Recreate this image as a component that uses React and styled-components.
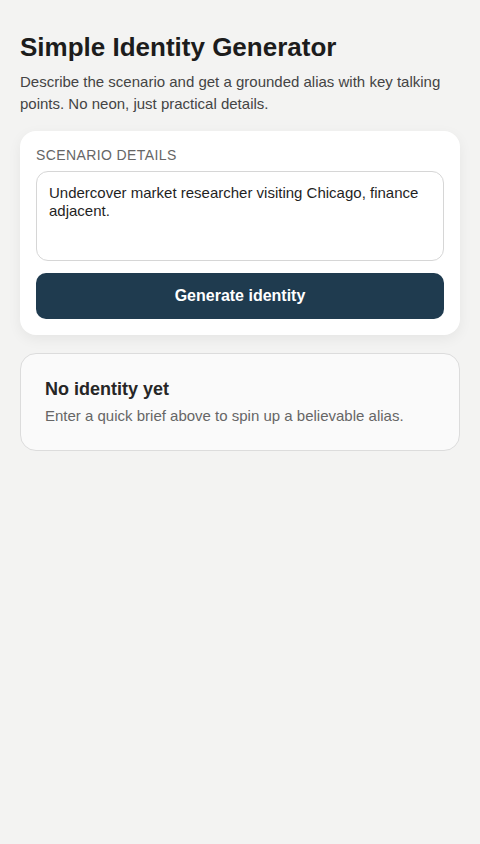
import React, { useState } from 'react';
import styled, { createGlobalStyle } from 'styled-components';

const GlobalStyle = createGlobalStyle`
  * { box-sizing: border-box; }
  body {
    margin: 0;
    background: #f3f3f2;
    font-family: "Liberation Sans", Arial, sans-serif;
    color: #1f1f1f;
  }
`;

const App = () => {
  const [brief, setBrief] = useState('Undercover market researcher visiting Chicago, finance adjacent.');

  return (
    <>
      <GlobalStyle />
      <Page>
        <Title>Simple Identity Generator</Title>
        <Intro>Describe the scenario and get a grounded alias with key talking points. No neon, just practical details.</Intro>
        <FormCard>
          <Label htmlFor="brief">Scenario details</Label>
          <Brief id="brief" value={brief} onChange={(e) => setBrief(e.target.value)} />
          <GenerateButton type="button">Generate identity</GenerateButton>
        </FormCard>
        <EmptyCard>
          <EmptyTitle>No identity yet</EmptyTitle>
          <EmptyText>Enter a quick brief above to spin up a believable alias.</EmptyText>
        </EmptyCard>
      </Page>
    </>
  );
};

export default App;

const Page = styled.main`
  display: flex;
  flex-direction: column;
  padding: 32px 20px;
`;

const Title = styled.h1`
  margin: 0;
  font-size: 26px;
  line-height: 30px;
  font-weight: 700;
  color: #1c1c1c;
`;

const Intro = styled.p`
  margin: 9px 0 16px;
  font-size: 15px;
  line-height: 22px;
  color: #444;
`;

const FormCard = styled.section`
  display: flex;
  flex-direction: column;
  background: #ffffff;
  border-radius: 16px;
  padding: 16px;
  box-shadow: 0 4px 14px rgba(0, 0, 0, 0.06);
`;

const Label = styled.label`
  font-size: 14px;
  line-height: 16px;
  text-transform: uppercase;
  letter-spacing: 0.4px;
  color: #666;
  margin-bottom: 8px;
`;

const Brief = styled.textarea`
  height: 90px;
  resize: none;
  border: 1px solid #d6d6d6;
  border-radius: 12px;
  padding: 12px;
  font-family: inherit;
  font-size: 15px;
  line-height: 18px;
  color: #1f1f1f;
  background: #fff;
  outline: none;
`;

const GenerateButton = styled.button`
  margin-top: 12px;
  height: 46px;
  border: none;
  border-radius: 10px;
  background: #1f3b4f;
  color: #fff;
  font-family: inherit;
  font-size: 16px;
  font-weight: 700;
  cursor: pointer;
`;

const EmptyCard = styled.section`
  margin-top: 18px;
  background: #fafafa;
  border: 1px solid #dcdcdc;
  border-radius: 16px;
  padding: 24px;
`;

const EmptyTitle = styled.h2`
  margin: 0;
  font-size: 18px;
  line-height: 22px;
  font-weight: 700;
  color: #262626;
`;

const EmptyText = styled.p`
  margin: 6px 0 0;
  font-size: 15px;
  line-height: 20px;
  color: #666;
`;
